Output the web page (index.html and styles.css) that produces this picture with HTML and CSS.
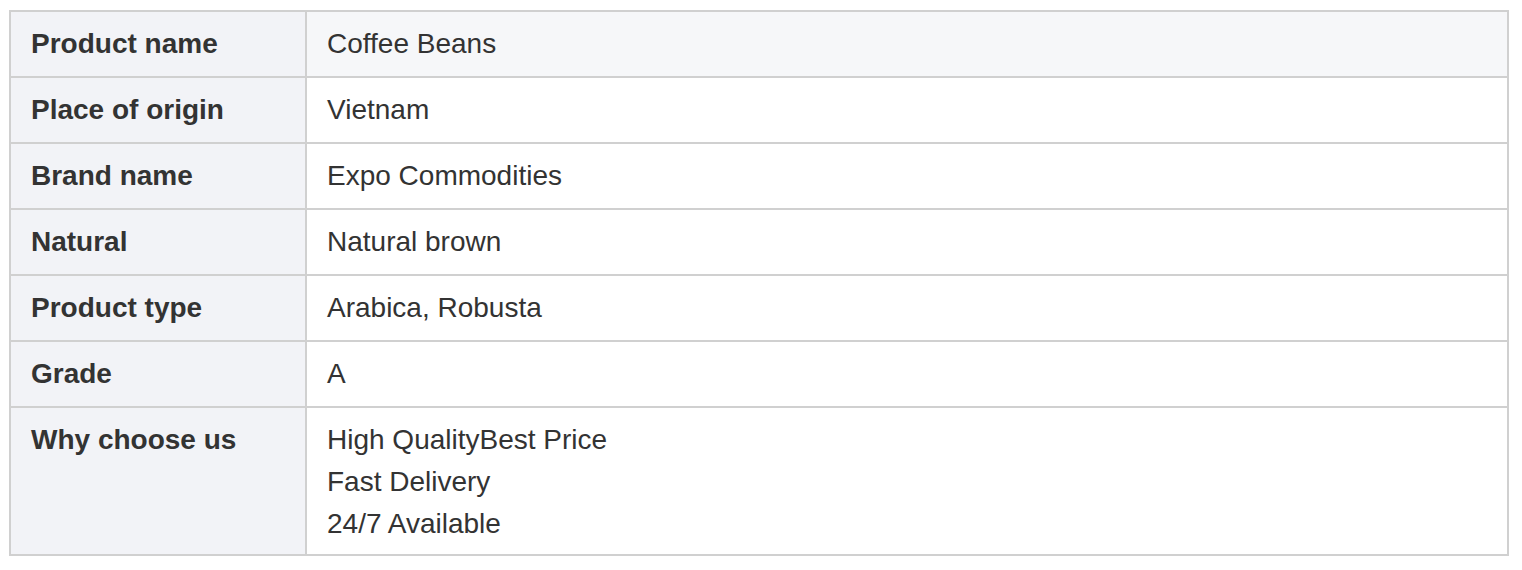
FILE: index.html
```html
<!DOCTYPE html>
<html lang="en">
<head>
    <meta charset="UTF-8">
    <meta name="viewport" content="width=device-width, initial-scale=1.0">
    <title>Product Details</title>
    <link rel="stylesheet" href="styles.css">
</head>
<body>

    <table class="spec-table">
        <tr class="first-row">
            <th>Product name</th>
            <td>Coffee Beans</td>
        </tr>
        <tr>
            <th>Place of origin</th>
            <td>Vietnam</td>
        </tr>
        <tr>
            <th>Brand name</th>
            <td>Expo Commodities</td>
        </tr>
        <tr>
            <th>Natural</th>
            <td>Natural brown</td>
        </tr>
        <tr>
            <th>Product type</th>
            <td>Arabica, Robusta</td>
        </tr>
        <tr>
            <th>Grade</th>
            <td>A</td>
        </tr>
        <tr class="last-row">
            <th>Why choose us</th>
            <td>High QualityBest Price<br>Fast Delivery<br>24/7 Available</td>
        </tr>
    </table>

</body>
</html>
```

FILE: styles.css
```css
body {
    margin: 10px 13px 0 9px;
    font-family: "Liberation Sans", Arial, sans-serif;
    color: #333;
    background: #fff;
}
.spec-table {
    width: 1500px;
    border-collapse: separate;
    border-spacing: 0;
    border-top: 2px solid #d0d0d0;
    border-left: 2px solid #d0d0d0;
    font-size: 28px;
    line-height: 42px;
}
.spec-table th,
.spec-table td {
    padding: 11px 20px;
    border-right: 2px solid #d0d0d0;
    border-bottom: 2px solid #d0d0d0;
    text-align: left;
    vertical-align: top;
}
.spec-table th {
    width: 254px;
    font-weight: bold;
    background: #f2f3f7;
}
.spec-table td {
    font-weight: normal;
    background: #fff;
}
.first-row td {
    background: #f6f7f9;
}
.last-row th,
.last-row td {
    padding-bottom: 9px;
}
```
